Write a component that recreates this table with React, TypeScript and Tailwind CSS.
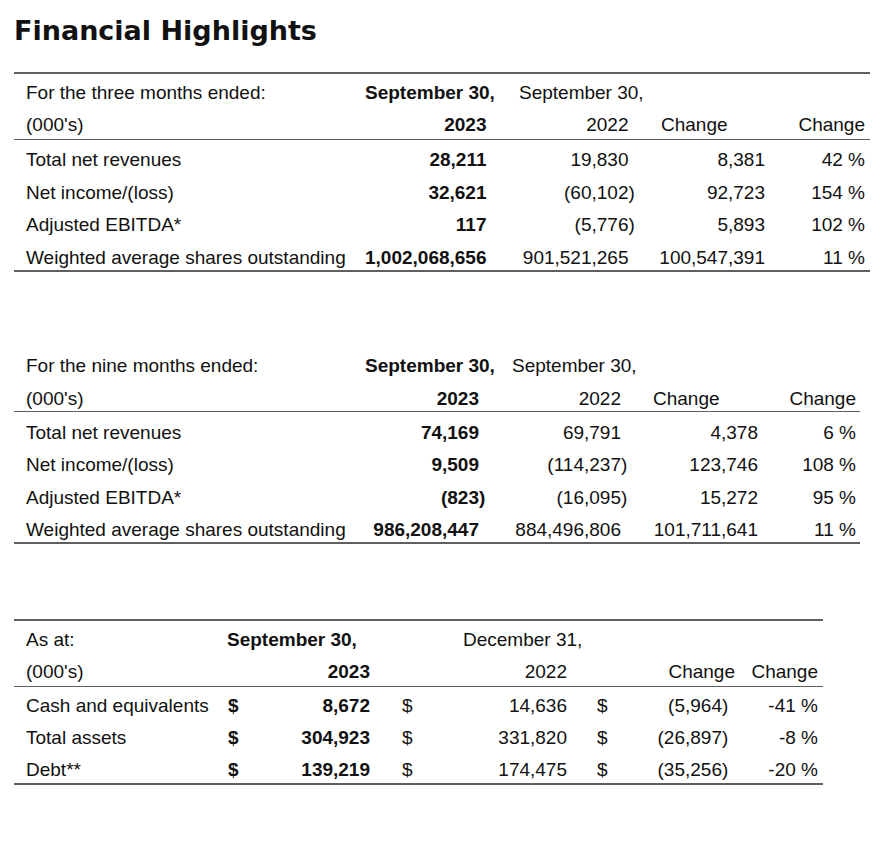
const Line = ({ w }: { w: string }) => <div className={`h-[1.5px] bg-[#5f5f5f] ${w}`} />

// numbers in parentheses let the closing paren hang past the column edge
const Num = ({ v }: { v: string }) =>
  v.endsWith(")") ? (
    <>
      {v.slice(0, -1)}
      <span className="mr-[-6.3px]">)</span>
    </>
  ) : (
    <>{v}</>
  )

const row = "flex h-[32.5px] pt-[8px] leading-[22px] whitespace-nowrap"
const row2 = "flex h-[32.5px] pt-[9.5px] leading-[22px] whitespace-nowrap"

const quarter = [
  ["Total net revenues", "28,211", "19,830", "8,381", "42 %"],
  ["Net income/(loss)", "32,621", "(60,102)", "92,723", "154 %"],
  ["Adjusted EBITDA*", "117", "(5,776)", "5,893", "102 %"],
  ["Weighted average shares outstanding", "1,002,068,656", "901,521,265", "100,547,391", "11 %"],
]

const nineMonths = [
  ["Total net revenues", "74,169", "69,791", "4,378", "6 %"],
  ["Net income/(loss)", "9,509", "(114,237)", "123,746", "108 %"],
  ["Adjusted EBITDA*", "(823)", "(16,095)", "15,272", "95 %"],
  ["Weighted average shares outstanding", "986,208,447", "884,496,806", "101,711,641", "11 %"],
]

const balance = [
  ["Cash and equivalents", "8,672", "14,636", "(5,964)", "-41 %"],
  ["Total assets", "304,923", "331,820", "(26,897)", "-8 %"],
  ["Debt**", "139,219", "174,475", "(35,256)", "-20 %"],
]

const App = () => {
  return (
    <div className="min-h-[843px] w-[892px] bg-white text-[#111] font-['Liberation_Sans',Arial,sans-serif] text-[19px]">
      <h1 className="pl-[14px] pt-[15px] leading-[32px] text-[27px] font-bold font-['DejaVu_Sans',Verdana,sans-serif]">
        Financial Highlights
      </h1>

      {/* Three months */}
      <div className="ml-[14px] mt-[25px] w-[856px]">
        <Line w="w-[856px]" />
        <div className={row}>
          <div className="w-[346px] pl-[12px]">For the three months ended:</div>
          <div className="w-[137px] pl-[5px] font-bold">September 30,</div>
          <div className="w-[143px] pl-[22px]">September 30,</div>
        </div>
        <div className={row}>
          <div className="w-[346px] pl-[12px]">(000's)</div>
          <div className="w-[137px] pr-[10.5px] text-right font-bold">2023</div>
          <div className="w-[143px] pr-[11.5px] text-right">2022</div>
          <div className="w-[136px] pl-[21px]">Change</div>
          <div className="w-[94px] pr-[5px] text-right">Change</div>
        </div>
        <Line w="w-[856px]" />
        {quarter.map((r) => (
          <div key={r[0]} className="flex h-[32.5px] pt-[9px] leading-[22px] whitespace-nowrap">
            <div className="w-[346px] pl-[12px]">{r[0]}</div>
            <div className="w-[137px] pr-[10.5px] text-right font-bold"><Num v={r[1]} /></div>
            <div className="w-[143px] pr-[11.5px] text-right"><Num v={r[2]} /></div>
            <div className="w-[136px] pr-[11px] text-right"><Num v={r[3]} /></div>
            <div className="w-[94px] pr-[5px] text-right">{r[4]}</div>
          </div>
        ))}
        <Line w="w-[856px]" />
      </div>

      {/* Nine months */}
      <div className="ml-[14px] mt-[74px] w-[846px]">
        <div className={row2}>
          <div className="w-[346px] pl-[12px]">For the nine months ended:</div>
          <div className="w-[130px] pl-[5px] font-bold">September 30,</div>
          <div className="w-[143px] pl-[22px]">September 30,</div>
        </div>
        <div className={row2}>
          <div className="w-[346px] pl-[12px]">(000's)</div>
          <div className="w-[130px] pr-[11px] text-right font-bold">2023</div>
          <div className="w-[143px] pr-[12px] text-right">2022</div>
          <div className="w-[136px] pl-[20px]">Change</div>
          <div className="w-[91px] pr-[4px] text-right">Change</div>
        </div>
        <Line w="w-[846px]" />
        {nineMonths.map((r) => (
          <div key={r[0]} className={row2}>
            <div className="w-[346px] pl-[12px]">{r[0]}</div>
            <div className="w-[130px] pr-[11px] text-right font-bold"><Num v={r[1]} /></div>
            <div className="w-[143px] pr-[12px] text-right"><Num v={r[2]} /></div>
            <div className="w-[136px] pr-[11px] text-right"><Num v={r[3]} /></div>
            <div className="w-[91px] pr-[4px] text-right">{r[4]}</div>
          </div>
        ))}
        <Line w="w-[846px]" />
      </div>

      {/* Balance sheet */}
      <div className="ml-[14px] mt-[75.5px] w-[809px]">
        <Line w="w-[809px]" />
        <div className={row}>
          <div className="w-[208px] pl-[12px]">As at:</div>
          <div className="w-[158px] pl-[5px] font-bold">September 30,</div>
          <div className="w-[197px] pl-[83px]">December 31,</div>
        </div>
        <div className={row}>
          <div className="w-[208px] pl-[12px]">(000's)</div>
          <div className="w-[158px] pr-[10px] text-right font-bold">2023</div>
          <div className="w-[197px] pr-[10px] text-right">2022</div>
          <div className="w-[163px] pr-[5px] text-right">Change</div>
          <div className="w-[83px] pr-[5px] text-right">Change</div>
        </div>
        <Line w="w-[809px]" />
        {balance.map((r) => (
          <div key={r[0]} className="flex h-[32px] pt-[8px] leading-[22px] whitespace-nowrap">
            <div className="w-[208px] pl-[12px]">{r[0]}</div>
            <div className="flex w-[158px] justify-between pl-[6px] pr-[10px] font-bold">
              <span>$</span>
              <span>{r[1]}</span>
            </div>
            <div className="flex w-[197px] justify-between pl-[22px] pr-[10px]">
              <span>$</span>
              <span>{r[2]}</span>
            </div>
            <div className="flex w-[163px] justify-between pl-[20px] pr-[18px]">
              <span>$</span>
              <span><Num v={r[3]} /></span>
            </div>
            <div className="w-[83px] pr-[5px] text-right">{r[4]}</div>
          </div>
        ))}
        <Line w="w-[809px]" />
      </div>
    </div>
  )
}

export default App
